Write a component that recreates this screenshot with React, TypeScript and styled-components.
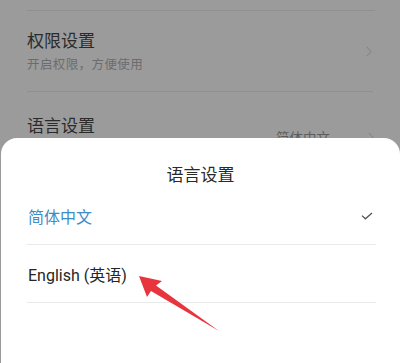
import styled, { createGlobalStyle } from 'styled-components';

const GlobalStyle = createGlobalStyle`
  html, body {
    margin: 0;
    padding: 0;
    background: #9b9b9b;
  }
  * {
    box-sizing: border-box;
  }
`;

const FONT = `Roboto, "Noto Sans", "Noto Sans CJK SC", sans-serif`;

export default function App() {
  return (
    <>
      <GlobalStyle />
      <Screen>
        <SettingsList>
          <SettingRow>
            <SettingText>
              <SettingTitle>权限设置</SettingTitle>
              <SettingSub>开启权限，方便使用</SettingSub>
            </SettingText>
            <Chevron />
          </SettingRow>
          <SettingRow $last>
            <SettingTitle>语言设置</SettingTitle>
            <SettingRight>
              <SettingValue>简体中文</SettingValue>
              <Chevron />
            </SettingRight>
          </SettingRow>
        </SettingsList>

        <Sheet>
          <SheetTitle>语言设置</SheetTitle>
          <OptionList>
            <Option $active>
              <span>简体中文</span>
              <Check viewBox="0 0 12 8" width="12" height="8">
                <path d="M1 3.6 L4.4 6.8 L11 1" fill="none" stroke="#555" strokeWidth="1.3" />
              </Check>
            </Option>
            <Option>
              <span>English (英语)</span>
            </Option>
          </OptionList>
        </Sheet>

        <Arrow viewBox="0 0 400 363" width="400" height="363">
          <polygon
            points="139,276 162,281 156,285.5 219,331 151,291 147,297"
            fill="#e8343c"
          />
        </Arrow>
      </Screen>
    </>
  );
}

function Chevron() {
  return (
    <ChevronSvg viewBox="0 0 6 11" width="6" height="11">
      <path d="M0.8 0.8 L5 5.5 L0.8 10.2" fill="none" stroke="#878787" strokeWidth="1.1" />
    </ChevronSvg>
  );
}

const Screen = styled.div`
  position: relative;
  width: 400px;
  height: 363px;
  overflow: hidden;
  background: #9b9b9b;
  font-family: ${FONT};
`;

const SettingsList = styled.div`
  margin: 10px 25px 0 27px;
  border-top: 1px solid #8f8f8f;
`;

const SettingRow = styled.div<{ $last?: boolean }>`
  display: flex;
  align-items: ${(p) => (p.$last ? 'flex-start' : 'center')};
  justify-content: space-between;
  height: ${(p) => (p.$last ? 'auto' : '81px')};
  padding: ${(p) => (p.$last ? '24px 0 0' : '0')};
  border-bottom: ${(p) => (p.$last ? 'none' : '1px solid #8f8f8f')};
  margin-right: ${(p) => (p.$last ? '0' : '2px')};
`;

const SettingText = styled.div`
  display: flex;
  flex-direction: column;
  gap: 6px;
  padding-top: 2px;
`;

const SettingTitle = styled.div`
  font-size: 17px;
  line-height: 20px;
  color: #2b2b2b;
`;

const SettingSub = styled.div`
  font-size: 12.5px;
  line-height: 16px;
  color: #6c6c6c;
  letter-spacing: 0.4px;
`;

const SettingRight = styled.div`
  display: flex;
  align-items: center;
  gap: 38px;
  padding-top: 11px;
`;

const SettingValue = styled.div`
  font-size: 13.5px;
  color: #5d5d5d;
`;

const ChevronSvg = styled.svg`
  display: block;
  margin-right: 1px;
`;

const Sheet = styled.div`
  position: absolute;
  left: 1px;
  right: 0;
  top: 138px;
  bottom: 0;
  background: #ffffff;
  border-radius: 16px 16px 0 0;
`;

const SheetTitle = styled.div`
  padding-top: 25px;
  height: 49px;
  text-align: center;
  font-size: 17px;
  line-height: 24px;
  color: #2a2a2a;
`;

const OptionList = styled.div`
  margin: 0 24px 0 26px;
`;

const Option = styled.div<{ $active?: boolean }>`
  display: flex;
  align-items: center;
  justify-content: space-between;
  height: 58px;
  padding: 0 2px 0 1px;
  border-bottom: 1.5px solid #e9e9e9;
  font-size: 16px;
  color: ${(p) => (p.$active ? '#3f8cc6' : '#262626')};
`;

const Check = styled.svg`
  display: block;
  margin-right: 1px;
`;

const Arrow = styled.svg`
  position: absolute;
  left: 0;
  top: 0;
  pointer-events: none;
`;
